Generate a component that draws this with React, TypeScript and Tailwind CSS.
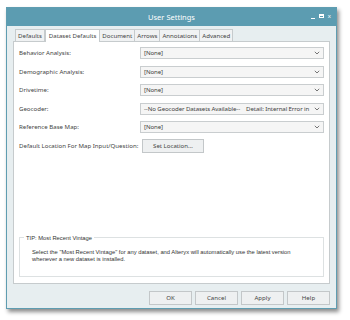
import React from "react";

const rows = [
  { label: "Behavior Analysis:", value: "[None]" },
  { label: "Demographic Analysis:", value: "[None]" },
  { label: "Drivetime:", value: "[None]" },
  { label: "Geocoder:", value: "--No Geocoder Datasets Available--", detail: "Detail: Internal Error in" },
  { label: "Reference Base Map:", value: "[None]" },
];

const tabs = ["Defaults", "Dataset Defaults", "Document", "Arrows", "Annotations", "Advanced"];

function Chevron() {
  return (
    <svg width="6" height="4" viewBox="0 0 6 4" className="shrink-0">
      <path d="M0.8 0.8 L3 3 L5.2 0.8" fill="none" stroke="#666" strokeWidth="0.9" />
    </svg>
  );
}

function Select({ value, detail }: { value: string; detail?: string }) {
  return (
    <div className="w-[184px] h-[12px] flex items-center border border-[#c9cdcf] bg-[#f5f5f5] pl-[3px] pr-[3px] leading-[10px] tracking-[-0.1px]">
      <span className="flex-1 whitespace-nowrap">{value}</span>
      {detail && <span className="ml-[6px] mr-[5px] whitespace-nowrap">{detail}</span>}
      <Chevron />
    </div>
  );
}

function Btn({ children, w }: { children: React.ReactNode; w: string }) {
  return (
    <div className={`${w} h-[14px] flex items-center justify-center border border-[#c3c7c9] bg-[#eef0f1] text-[#444] leading-[10px]`}>
      {children}
    </div>
  );
}

export default function App() {
  return (
    <div className="w-[350px] h-[320px] bg-white pl-[6px] pt-[7px] font-['Noto_Sans',sans-serif] text-[6.1px] text-[#3f3f3f] leading-[10px]">
      <div className="w-[331px] h-[302px] flex flex-col bg-[#e7eef0] border border-[#5f9db1] shadow-[2px_3px_4px_rgba(0,0,0,0.45)]">
        {/* Title bar */}
        <div className="relative h-[18px] shrink-0 flex items-center justify-center bg-[#5c9cb1] text-white text-[7.5px]">
          User Settings
          <div className="absolute right-[5px] top-[5px] flex items-center gap-[4px] text-[6px]">
            <span className="block w-[4px] h-[1px] bg-white mt-[4px]" />
            <span className="block w-[5px] h-[4px] border border-white border-t-2" />
            <span className="leading-none">x</span>
          </div>
        </div>

        <div className="flex-1 flex flex-col px-[6px] pt-[2px]">
          {/* Tabs */}
          <div className="flex items-end h-[13px] pl-[2px]">
            {tabs.map((t) =>
              t === "Dataset Defaults" ? (
                <div
                  key={t}
                  className="h-[13px] px-[3px] flex items-center bg-white border border-b-0 border-[#c6cbcd] relative top-[1px] z-10"
                >
                  {t}
                </div>
              ) : (
                <div
                  key={t}
                  className="h-[12px] px-[2px] flex items-center bg-[#f0f2f3] border border-b-0 border-[#c6cbcd] -ml-px first:ml-0"
                >
                  {t}
                </div>
              )
            )}
          </div>

          {/* Panel */}
          <div className="h-[243px] bg-white border border-[#c6cbcd] flex flex-col pl-[5px] pr-[5px] pt-[5px]">
            <div className="flex flex-col gap-[6.5px]">
              {rows.map((r) => (
                <div key={r.label} className="flex items-center justify-between h-[12px]">
                  <span>{r.label}</span>
                  <Select value={r.value} detail={r.detail} />
                </div>
              ))}
              <div className="flex items-center h-[12px]">
                <span className="w-[123px]">Default Location For Map Input/Question:</span>
                <Btn w="w-[62px]">Set Location...</Btn>
              </div>
            </div>

            <div className="flex-1" />

            {/* Tip group box */}
            <div className="relative mb-[6px] h-[40px] border border-[#dde1e2] font-['Liberation_Sans',sans-serif] text-[5.8px] text-[#333]">
              <span className="absolute -top-[5px] left-[4px] bg-white px-[2px]">TIP: Most Recent Vintage</span>
              <div className="pt-[11px] pl-[12px] leading-[7px]">
                Select the "Most Recent Vintage" for any dataset, and Alteryx will automatically use the latest version
                <br />
                whenever a new dataset is installed.
              </div>
            </div>
          </div>

          {/* Buttons */}
          <div className="flex justify-end gap-[3px] pt-[7px]">
            <Btn w="w-[43px]">OK</Btn>
            <Btn w="w-[43px]">Cancel</Btn>
            <Btn w="w-[43px]">Apply</Btn>
            <Btn w="w-[43px]">Help</Btn>
          </div>
        </div>
      </div>
    </div>
  );
}
